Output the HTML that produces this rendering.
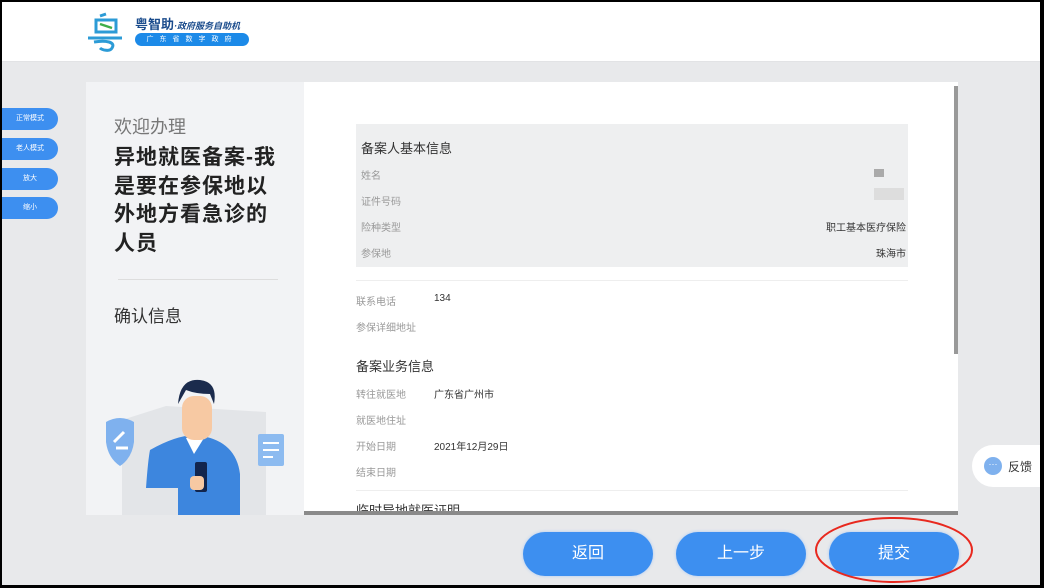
<!DOCTYPE html>
<html><head><meta charset="utf-8">
<style>
*{margin:0;padding:0;box-sizing:border-box}
body{width:1044px;height:588px;overflow:hidden;background:#000;font-family:"Liberation Sans","Noto Sans CJK SC",sans-serif;position:relative}
.frame{position:absolute;left:2px;top:2px;width:1038px;height:583px;background:#e8e9eb;overflow:hidden}
.hdr{position:absolute;left:0;top:0;width:1038px;height:60px;background:#fff;border-bottom:1px solid #e2e3e5}
.abs{position:absolute}
.side{position:absolute;left:0;width:56px;height:22px;background:#3d8ff0;border-radius:0 11px 11px 0;color:#fff;font-size:7px;line-height:22px;text-align:center}
.lp{position:absolute;left:84px;top:80px;width:218px;height:433px;background:#f2f3f5}
.rp{position:absolute;left:302px;top:80px;width:654px;height:433px;background:#fff;overflow:hidden}
.lbl{position:absolute;font-size:10px;color:#999}
.val{position:absolute;font-size:10px;color:#333}
.btn{position:absolute;top:530px;width:130px;height:44px;border-radius:22px;background:#3d8ff0;color:#fff;font-size:16px;line-height:44px;text-align:center;box-shadow:0 0 3px #a9c9f5}
</style></head><body>
<div class="frame">
<div class="hdr">
 <svg class="abs" style="left:84px;top:10px" width="44" height="40" viewBox="0 0 44 40">
  <path d="M14 4 L20 2 M10 8 H30 V20 H10 Z" stroke="#2c9bd6" stroke-width="3" fill="none"/>
  <path d="M14 12 L26 16" stroke="#3fae49" stroke-width="2.5"/>
  <path d="M2 26 H36 M8 30 C20 28 30 30 26 36 C24 40 16 38 14 36" stroke="#2c9bd6" stroke-width="3" fill="none"/>
 </svg>
 <div class="abs" style="left:133px;top:12px;font-size:13px;font-weight:bold;color:#1a4b8c">粤智助<span style="font-size:9px;font-style:italic">·政府服务自助机</span></div>
 <div class="abs" style="left:133px;top:31px;width:114px;height:13px;border-radius:7px;background:#1c8ae8;color:#fff;font-size:7px;line-height:13px;text-align:center;letter-spacing:6px">广东省数字政府</div>
</div>
<div class="side" style="top:106px">正常模式</div>
<div class="side" style="top:136px">老人模式</div>
<div class="side" style="top:166px">放大</div>
<div class="side" style="top:195px">缩小</div>

<div class="lp">
 <div class="abs" style="left:28px;top:31px;font-size:18px;color:#777">欢迎办理</div>
 <div class="abs" style="left:28px;top:62px;width:170px;font-size:21px;letter-spacing:1px;line-height:28.5px;font-weight:bold;color:#222">异地就医备案-我<br>是要在参保地以<br>外地方看急诊的<br>人员</div>
 <div class="abs" style="left:32px;top:197px;width:160px;height:1px;background:#ddd"></div>
 <div class="abs" style="left:28px;top:220px;font-size:17px;color:#333">确认信息</div>
 <svg class="abs" style="left:0;top:280px" width="218" height="153" viewBox="0 0 218 153">
  <path d="M36 58 L80 44 L180 50 V153 H36 Z" fill="#e3e5e8"/>
  <path d="M20 60 Q34 52 48 60 V80 Q46 96 34 104 Q22 96 20 80 Z" fill="#7fb1ee"/>
  <path d="M28 80 L38 70 M30 86 H42" stroke="#fff" stroke-width="3"/>
  <rect x="172" y="72" width="26" height="32" rx="2" fill="#8dbbf0"/>
  <path d="M177 81 H193 M177 88 H193 M177 95 H187" stroke="#fff" stroke-width="2"/>
  <path d="M64 88 Q96 70 116 74 Q150 80 154 112 V153 H92 V126 H60 Q62 98 64 88 Z" fill="#3d86de"/>
  <path d="M100 76 L108 92 L118 76 Z" fill="#fff"/>
  <rect x="96" y="34" width="30" height="44" rx="12" fill="#f7c9a3"/>
  <path d="M92 42 Q94 16 114 18 Q132 20 128 42 L124 32 Q110 32 100 28 Z" fill="#1b2b4d"/>
  <rect x="109" y="100" width="12" height="30" rx="2" fill="#12254d"/>
  <rect x="104" y="114" width="14" height="14" rx="4" fill="#f7c9a3"/>
 </svg>
</div>

<div class="rp">
 <div class="abs" style="left:52px;top:42px;width:552px;height:143px;background:#eeeff0"></div>
 <div class="abs" style="left:57px;top:56px;font-size:13px;color:#333">备案人基本信息</div>
 <div class="lbl" style="left:57px;top:85px">姓名</div>
 <div class="lbl" style="left:57px;top:111px">证件号码</div>
 <div class="lbl" style="left:57px;top:137px">险种类型</div>
 <div class="lbl" style="left:57px;top:163px">参保地</div>
 <div class="abs" style="left:570px;top:87px;width:10px;height:8px;background:#aaa"></div>
 <div class="abs" style="left:570px;top:106px;width:30px;height:12px;background:#ddd"></div>
 <div class="val" style="right:52px;top:137px">职工基本医疗保险</div>
 <div class="val" style="right:52px;top:163px">珠海市</div>
 <div class="abs" style="left:52px;top:198px;width:552px;height:1px;background:#eee"></div>
 <div class="lbl" style="left:52px;top:211px">联系电话</div><div class="val" style="left:130px;top:211px">134</div>
 <div class="lbl" style="left:52px;top:237px">参保详细地址</div>
 <div class="abs" style="left:52px;top:274px;font-size:13px;color:#333">备案业务信息</div>
 <div class="lbl" style="left:52px;top:304px">转往就医地</div><div class="val" style="left:130px;top:304px">广东省广州市</div>
 <div class="lbl" style="left:52px;top:330px">就医地住址</div>
 <div class="lbl" style="left:52px;top:356px">开始日期</div><div class="val" style="left:130px;top:356px">2021年12月29日</div>
 <div class="lbl" style="left:52px;top:382px">结束日期</div>
 <div class="abs" style="left:52px;top:408px;width:552px;height:1px;background:#eee"></div>
 <div class="abs" style="left:52px;top:418px;font-size:13px;color:#333">临时异地就医证明</div>
 <div class="abs" style="left:0;top:429px;width:654px;height:4px;background:#8a8a8a"></div>
 <div class="abs" style="left:650px;top:4px;width:4px;height:268px;background:#999"></div>
</div>

<div class="abs" style="left:970px;top:443px;width:74px;height:42px;border-radius:21px 0 0 21px;background:#fff"></div>
<div class="abs" style="left:982px;top:455px;width:18px;height:18px;border-radius:50%;background:#7fb1ee;color:#fff;font-size:9px;line-height:14px;text-align:center">···</div>
<div class="abs" style="left:1006px;top:456px;font-size:12px;color:#333">反馈</div>

<div class="btn" style="left:521px">返回</div>
<div class="btn" style="left:674px">上一步</div>
<div class="btn" style="left:827px">提交</div>
<svg class="abs" style="left:810px;top:512px" width="164" height="72"><ellipse cx="82" cy="36" rx="78" ry="32" fill="none" stroke="#e8281e" stroke-width="2"/></svg>
</div>
</body></html>
